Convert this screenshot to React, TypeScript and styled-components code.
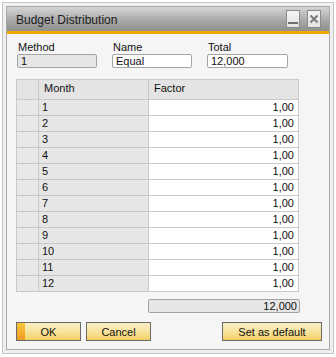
import { createGlobalStyle, styled } from "styled-components";

const GlobalStyle = createGlobalStyle`
  html, body {
    margin: 0;
    padding: 0;
    background: #ffffff;
  }
  body {
    font-family: "Liberation Sans", Arial, sans-serif;
    font-size: 11px;
    color: #111;
  }
`;

const Frame = styled.div`
  margin: 2px 0 0 2px;
  width: 324px;
  height: 344px;
  padding: 3px;
  background: #f0f0f0;
  border: 1px solid #c4c4c4;
`;

const Window = styled.div`
  height: 342px;
  border: 1px solid #a9a9a9;
  background: #f5f5f5;
  display: flex;
  flex-direction: column;
`;

const TitleBar = styled.div`
  height: 24px;
  display: flex;
  align-items: center;
  padding: 0 8px 0 9px;
  background: linear-gradient(#d6d6d6, #a9a9a9 55%, #8f8f8f);
  border-bottom: 3px solid #f0ab00;
`;

const Title = styled.div`
  flex: 1;
  font-size: 12px;
  color: #1c1c1c;
  padding-top: 1px;
`;

const TitleButton = styled.button`
  width: 14px;
  height: 18px;
  margin-left: 7px;
  padding: 0;
  border: 1px solid #8a8a8a;
  background: linear-gradient(#f4f4f4, #e2e2e2);
  display: flex;
  align-items: center;
  justify-content: center;
`;

const Body = styled.div`
  flex: 1;
  padding: 7px 7px 0 10px;
  display: flex;
  flex-direction: column;
`;

const Fields = styled.div`
  display: grid;
  grid-template-columns: 80px 80px 81px;
  column-gap: 15px;
`;

const Field = styled.div`
  display: flex;
  flex-direction: column;
`;

const Label = styled.div`
  height: 13px;
  line-height: 13px;
  padding-left: 1px;
`;

const Input = styled.div<{ $readOnly?: boolean }>`
  height: 12px;
  line-height: 12px;
  padding: 0 3px;
  border: 1px solid #a4a4a4;
  border-radius: 2px;
  background: ${(p) => (p.$readOnly ? "#e6e6e6" : "#ffffff")};
`;

const Grid = styled.table`
  margin: 11px 0 0 -1px;
  width: 283px;
  border-collapse: collapse;
  table-layout: fixed;
`;

const HeadCell = styled.th`
  height: 19px;
  padding: 0 0 0 5px;
  line-height: 16px;
  vertical-align: top;
  text-align: left;
  font-weight: normal;
  background: #e4e4e4;
  border: 1px solid #c9c9c9;
`;

const Cell = styled.td<{ $value?: boolean }>`
  height: 15px;
  line-height: 15px;
  padding: 0 ${(p) => (p.$value ? "4px" : "0")} 0 ${(p) => (p.$value ? "0" : "3px")};
  text-align: ${(p) => (p.$value ? "right" : "left")};
  background: ${(p) => (p.$value ? "#ffffff" : "#e6e6e6")};
  border: 1px solid #c9c9c9;
`;

const RowHead = styled.td`
  padding: 0;
  background: #e8e8e8;
  border: 1px solid #c9c9c9;
`;

const TotalRow = styled.div`
  margin-top: 7px;
  display: flex;
  justify-content: flex-start;
`;

const TotalBox = styled.div`
  margin-left: 131px;
  width: 144px;
  height: 12px;
  line-height: 12px;
  padding: 0 2px 0 4px;
  text-align: right;
  border: 1px solid #a4a4a4;
  border-radius: 2px;
  background: #e6e6e6;
`;

const Buttons = styled.div`
  margin-top: 9px;
  display: flex;
  gap: 5px;
  margin-left: -1px;
`;

const Button = styled.button<{ $width: number; $primary?: boolean }>`
  position: relative;
  width: ${(p) => p.$width}px;
  height: 19px;
  padding: 0;
  font-family: inherit;
  font-size: 11px;
  color: #111;
  border: 1px solid #6a6a6a;
  background: linear-gradient(#fbeec6, #f7e29a 55%, #f3d160);
  &:last-child {
    margin-left: auto;
  }
  ${(p) =>
    p.$primary
      ? `&::before {
    content: "";
    position: absolute;
    left: 0;
    top: 0;
    bottom: 0;
    width: 8px;
    background: linear-gradient(#f8c63c, #f19b22);
  }`
      : ""}
`;

const months = Array.from({ length: 12 }, (_, i) => i + 1);

export default function App() {
  return (
    <>
      <GlobalStyle />
      <Frame>
        <Window>
          <TitleBar>
            <Title>Budget Distribution</Title>
            <TitleButton aria-label="minimize">
              <svg width="10" height="14" viewBox="0 0 10 14">
                <rect x="0" y="10" width="10" height="2" fill="#6e6e6e" />
              </svg>
            </TitleButton>
            <TitleButton aria-label="close">
              <svg width="10" height="10" viewBox="0 0 10 10">
                <path d="M1.5 1.5 L8.5 8.5 M8.5 1.5 L1.5 8.5" stroke="#7a7a7a" strokeWidth="2" />
              </svg>
            </TitleButton>
          </TitleBar>
          <Body>
            <Fields>
              <Field>
                <Label>Method</Label>
                <Input $readOnly>1</Input>
              </Field>
              <Field>
                <Label>Name</Label>
                <Input>Equal</Input>
              </Field>
              <Field>
                <Label>Total</Label>
                <Input>12,000</Input>
              </Field>
            </Fields>
            <Grid>
              <colgroup>
                <col style={{ width: 22 }} />
                <col style={{ width: 110 }} />
                <col style={{ width: 150 }} />
              </colgroup>
              <thead>
                <tr>
                  <HeadCell />
                  <HeadCell>Month</HeadCell>
                  <HeadCell>Factor</HeadCell>
                </tr>
              </thead>
              <tbody>
                {months.map((m) => (
                  <tr key={m}>
                    <RowHead />
                    <Cell>{m}</Cell>
                    <Cell $value>1,00</Cell>
                  </tr>
                ))}
              </tbody>
            </Grid>
            <TotalRow>
              <TotalBox>12,000</TotalBox>
            </TotalRow>
            <Buttons>
              <Button $width={65} $primary>
                OK
              </Button>
              <Button $width={65}>Cancel</Button>
              <Button $width={100}>Set as default</Button>
            </Buttons>
          </Body>
        </Window>
      </Frame>
    </>
  );
}
